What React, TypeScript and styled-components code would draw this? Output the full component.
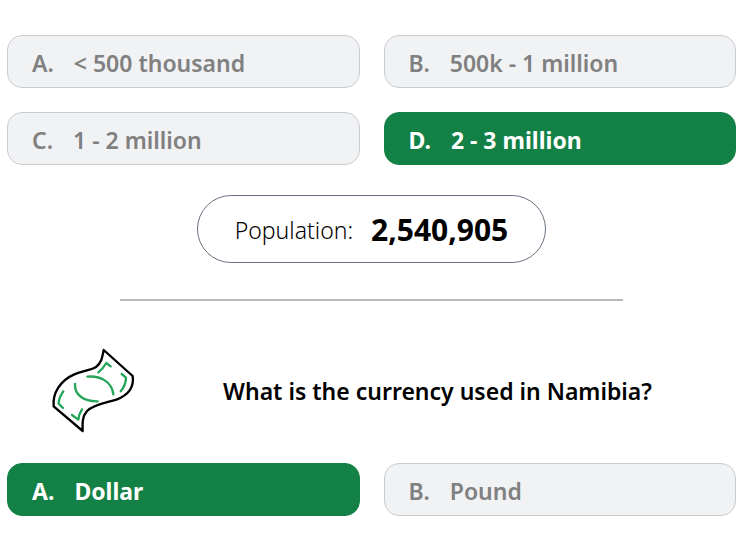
import React from "react";
import styled, { createGlobalStyle } from "styled-components";

const GlobalStyle = createGlobalStyle`
  * { box-sizing: border-box; }
  body {
    margin: 0;
    background: #fff;
    color: #000;
    font-family: "Noto Sans", "Open Sans", sans-serif;
  }
`;

const Quiz = styled.main`
  display: flex;
  flex-direction: column;
  padding: 35px 9px 20px 7px;
`;

const Answers = styled.div`
  display: grid;
  grid-template-columns: 1fr 1fr;
  gap: 24px;
`;

const Answer = styled.button<{ $correct?: boolean }>`
  display: flex;
  align-items: center;
  gap: 20px;
  height: 53px;
  padding: 2px 24px 0;
  border: 1px solid ${(p) => (p.$correct ? "#138046" : "#c9cbcf")};
  border-radius: 15px;
  background: ${(p) => (p.$correct ? "#138046" : "#f1f2f4")};
  color: ${(p) => (p.$correct ? "#fff" : "#808080")};
  font-family: inherit;
  font-size: 23px;
  line-height: 30px;
  font-weight: ${(p) => (p.$correct ? 700 : 600)};
  text-align: left;
`;

const Fact = styled.p`
  display: flex;
  align-items: center;
  align-self: center;
  gap: 18px;
  height: 68px;
  margin: 30px 0 36px;
  padding: 2px 37px 0;
  border: 1px solid #68727f;
  border-radius: 34px;
  font-size: 23px;
  font-weight: 300;
  line-height: 36px;
`;

const FactValue = styled.strong`
  font-size: 30px;
  font-weight: 700;
`;

const Divider = styled.hr`
  width: 69%;
  height: 2px;
  margin: 0 auto;
  border: 0;
  background: #b8b8b8;
`;

const QuestionRow = styled.section`
  display: flex;
  align-items: center;
  padding: 46px 0 28px;
`;

const Banknote = styled.svg`
  flex: none;
  width: 88px;
  height: 88px;
  margin: 0 2px 0 42px;
`;

const Question = styled.h2`
  flex: 1;
  margin: 0;
  font-size: 23px;
  font-weight: 600;
  line-height: 32px;
  text-align: center;
`;

type Option = { letter: string; text: string; correct?: boolean };

const population: Option[] = [
  { letter: "A.", text: "< 500 thousand" },
  { letter: "B.", text: "500k - 1 million" },
  { letter: "C.", text: "1 - 2 million" },
  { letter: "D.", text: "2 - 3 million", correct: true },
];

const currency: Option[] = [
  { letter: "A.", text: "Dollar", correct: true },
  { letter: "B.", text: "Pound" },
];

function AnswerGrid({ options }: { options: Option[] }) {
  return (
    <Answers>
      {options.map((o) => (
        <Answer key={o.letter} type="button" $correct={o.correct}>
          <span>{o.letter}</span>
          <span>{o.text}</span>
        </Answer>
      ))}
    </Answers>
  );
}

export default function App() {
  return (
    <>
      <GlobalStyle />
      <Quiz>
        <AnswerGrid options={population} />
        <Fact>
          <span>Population:</span>
          <FactValue>2,540,905</FactValue>
        </Fact>
        <Divider />
        <QuestionRow>
          <Banknote viewBox="0 0 264 264" fill="none" aria-hidden="true">
            <g stroke="#000" strokeWidth="7" strokeLinejoin="round">
              <path d="M164 9 L251 87 C256 121 236 145 202 158 C170 168 135 172 114 192 C100 208 100 227 101 252 L14 178 C10 139 34 100 76 82 C101 71 123 71 141 60 C159 46 160 29 164 9Z" />
            </g>
            <g stroke="#25a55a" strokeWidth="7" strokeLinecap="round" strokeLinejoin="round">
              <path d="M148 76 C160 67 166 58 172 48 L185 58" />
              <path d="M218 81 L231 92 C231 109 224 122 215 133" />
              <path d="M115 89 C154 85 189 105 193 142" />
              <path d="M78 111 C76 143 104 164 146 163" />
              <path d="M43 133 C32 148 29 160 29 170 L42 183" />
              <path d="M99 187 C92 197 89 207 88 218 L69 204" />
            </g>
          </Banknote>
          <Question>What is the currency used in Namibia?</Question>
        </QuestionRow>
        <AnswerGrid options={currency} />
      </Quiz>
    </>
  );
}
